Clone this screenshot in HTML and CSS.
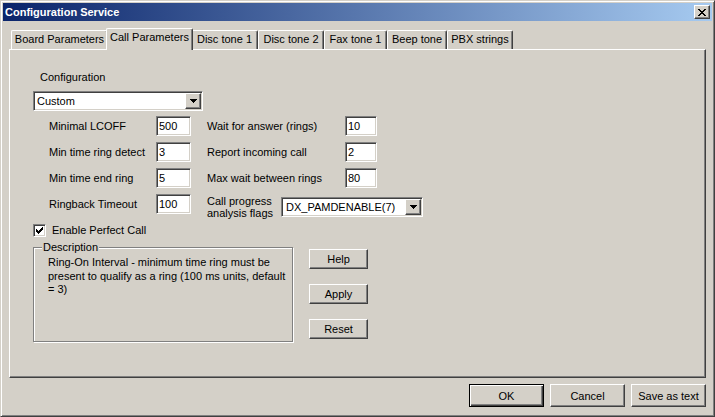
FILE: index.html
```html
<!DOCTYPE html>
<html>
<head>
<meta charset="utf-8">
<title>Configuration Service</title>
<link rel="stylesheet" href="styles.css">
</head>
<body>
<div class="window">
  <div class="titlebar">
    <span class="title">Configuration Service</span>
    <button class="close bevel" type="button" aria-label="Close">
      <svg width="8" height="7" viewBox="0 0 8 7" shape-rendering="crispEdges">
        <rect x="0" y="0" width="2" height="1"/><rect x="6" y="0" width="2" height="1"/>
        <rect x="1" y="1" width="2" height="1"/><rect x="5" y="1" width="2" height="1"/>
        <rect x="2" y="2" width="4" height="1"/>
        <rect x="3" y="3" width="2" height="1"/>
        <rect x="2" y="4" width="4" height="1"/>
        <rect x="1" y="5" width="2" height="1"/><rect x="5" y="5" width="2" height="1"/>
        <rect x="0" y="6" width="2" height="1"/><rect x="6" y="6" width="2" height="1"/>
      </svg>
    </button>
  </div>

  <div class="tabs">
    <div class="tab t-board">Board Parameters</div>
    <div class="tab t-call active">Call Parameters</div>
    <div class="tab t-disc1">Disc tone 1</div>
    <div class="tab t-disc2">Disc tone 2</div>
    <div class="tab t-fax">Fax tone 1</div>
    <div class="tab t-beep">Beep tone</div>
    <div class="tab t-pbx">PBX strings</div>
  </div>

  <div class="panel">
    <div class="config-label">Configuration</div>
    <div class="combo sunken combo-config">
      <span class="combo-text">Custom</span>
      <span class="combo-btn bevel">
        <svg width="7" height="4" viewBox="0 0 7 4" shape-rendering="crispEdges">
          <rect x="0" y="0" width="7" height="1"/><rect x="1" y="1" width="5" height="1"/>
          <rect x="2" y="2" width="3" height="1"/><rect x="3" y="3" width="1" height="1"/>
        </svg>
      </span>
    </div>

    <div class="fields">
      <span class="lbl c-l">Minimal LCOFF</span>
      <span class="edit sunken c-e">500</span>
      <span class="lbl c-rl">Wait for answer (rings)</span>
      <span class="edit sunken c-re">10</span>

      <span class="lbl c-l">Min time ring detect</span>
      <span class="edit sunken c-e">3</span>
      <span class="lbl c-rl">Report incoming call</span>
      <span class="edit sunken c-re">2</span>

      <span class="lbl c-l">Min time end ring</span>
      <span class="edit sunken c-e">5</span>
      <span class="lbl c-rl">Max wait between rings</span>
      <span class="edit sunken c-re">80</span>

      <span class="lbl c-l">Ringback Timeout</span>
      <span class="edit sunken c-e">100</span>
      <span class="lbl2 c-rl2">Call progress<br>analysis flags</span>
      <div class="combo sunken combo-flags">
        <span class="combo-text">DX_PAMDENABLE(7)</span>
        <span class="combo-btn bevel">
          <svg width="7" height="4" viewBox="0 0 7 4" shape-rendering="crispEdges">
            <rect x="0" y="0" width="7" height="1"/><rect x="1" y="1" width="5" height="1"/>
            <rect x="2" y="2" width="3" height="1"/><rect x="3" y="3" width="1" height="1"/>
          </svg>
        </span>
      </div>
    </div>

    <div class="check-row">
      <span class="checkbox sunken">
        <svg width="7" height="7" viewBox="0 0 7 7" shape-rendering="crispEdges">
          <rect x="0" y="2" width="1" height="3"/><rect x="1" y="3" width="1" height="3"/>
          <rect x="2" y="4" width="1" height="3"/><rect x="3" y="3" width="1" height="3"/>
          <rect x="4" y="2" width="1" height="3"/><rect x="5" y="1" width="1" height="3"/>
          <rect x="6" y="0" width="1" height="3"/>
        </svg>
      </span>
      <span class="check-label">Enable Perfect Call</span>
    </div>

    <div class="group-row">
      <fieldset class="group">
        <legend>Description</legend>
        <p class="desc">Ring-On Interval - minimum time ring must be<br>present to qualify as a ring (100 ms units, default<br>= 3)</p>
      </fieldset>
      <div class="side-buttons">
        <button class="btn bevel side" type="button">Help</button>
        <button class="btn bevel side" type="button">Apply</button>
        <button class="btn bevel side" type="button">Reset</button>
      </div>
    </div>
  </div>

  <div class="footer">
    <button class="btn foot default" type="button">OK</button>
    <button class="btn bevel foot" type="button">Cancel</button>
    <button class="btn bevel foot" type="button">Save as text</button>
  </div>
</div>
</body>
</html>
```

FILE: styles.css
```css
* { box-sizing: border-box; }

html, body {
  margin: 0;
  padding: 0;
}

body {
  background: #d4d0c8;
  font-family: "Liberation Sans", Arial, sans-serif;
  font-size: 11px;
  color: #000;
}

.window {
  width: 715px;
  height: 417px;
  border: 1px solid;
  border-color: #d4d0c8 #404040 #404040 #d4d0c8;
  box-shadow: inset 1px 1px #fff, inset -1px -1px #808080;
  padding: 2px;
  background: #d4d0c8;
}

/* generic 3D styles */
.bevel {
  background: #d4d0c8;
  border: 1px solid;
  border-color: #fff #404040 #404040 #fff;
  box-shadow: inset -1px -1px #808080;
}

.sunken {
  background: #fff;
  border: 1px solid;
  border-color: #808080 #fff #fff #808080;
  box-shadow: inset 1px 1px #404040, inset -1px -1px #d4d0c8;
}

/* title bar */
.titlebar {
  height: 18px;
  display: flex;
  align-items: center;
  justify-content: space-between;
  padding: 0 2px;
  background: linear-gradient(to right, #0a246a, #a6caf0);
}

.title {
  color: #fff;
  font-weight: bold;
  line-height: 13px;
}

.close {
  width: 16px;
  height: 14px;
  padding: 0;
  display: flex;
  align-items: center;
  justify-content: center;
}

.close svg { fill: #000; display: block; margin-left: -1px; }

/* tabs */
.tabs {
  display: flex;
  align-items: flex-end;
  margin: 7px 0 -1px 8px;
  height: 22px;
}

.tab {
  flex: 0 0 auto;
  height: 19px;
  margin-bottom: 1px;
  border-top: 1px solid #fff;
  border-left: 1px solid #fff;
  border-right: 1px solid #404040;
  box-shadow: inset -1px 0 #808080;
  border-radius: 2px 2px 0 0;
  text-align: center;
  line-height: 17px;
  white-space: nowrap;
  background: #d4d0c8;
}

.t-board { width: 97px; }
.t-call { width: 83px; }
.t-disc1 { width: 67px; }
.t-disc2 { width: 66px; }
.t-fax { width: 63px; }
.t-beep { width: 60px; }
.t-pbx { width: 66px; }

.tab.active {
  width: 87px;
  height: 22px;
  margin: 0 -2px;
  padding-top: 1px;
  line-height: 15px;
  position: relative;
  z-index: 1;
}

/* panel */
.panel {
  height: 329px;
  margin: 0 6px;
  border-top: 1px solid #fff;
  border-left: 1px solid #fff;
  border-right: 1px solid #404040;
  border-bottom: 1px solid #404040;
  box-shadow: inset -1px -1px #808080;
}

.config-label {
  margin: 21px 0 0 30px;
  line-height: 13px;
}

.combo {
  display: flex;
  height: 20px;
  padding: 1px;
}

.combo-config {
  width: 170px;
  margin: 7px 0 0 23px;
}

.combo-text {
  flex: 1;
  line-height: 16px;
  padding-left: 2px;
  white-space: nowrap;
}

.combo-btn {
  width: 16px;
  height: 16px;
  display: flex;
  align-items: center;
  justify-content: center;
}

.combo-btn svg { fill: #000; display: block; }

/* field grid */
.fields {
  display: grid;
  grid-template-columns: 107px 35px 16px 74px 64px 32px 46px;
  grid-auto-rows: auto;
  row-gap: 6px;
  margin: 5px 0 0 39px;
  align-items: start;
}

.lbl {
  line-height: 20px;
  white-space: nowrap;
}

.c-l { grid-column: 1; }
.c-e { grid-column: 2; }
.c-rl { grid-column: 4 / span 2; }
.c-re { grid-column: 6; }

.lbl2 {
  grid-column: 4;
  line-height: 12px;
  margin-top: 1px;
  white-space: nowrap;
}

.edit {
  height: 20px;
  padding: 0 2px;
  line-height: 18px;
  white-space: nowrap;
  display: block;
}

.combo-flags {
  grid-column: 5 / span 3;
  margin-top: 3px;
}

.combo-flags .combo-text { padding-left: 3px; }

/* checkbox */
.check-row {
  display: flex;
  align-items: center;
  margin: 5px 0 0 23px;
  height: 13px;
}

.checkbox {
  width: 13px;
  height: 13px;
  display: flex;
  align-items: center;
  justify-content: center;
}

.checkbox svg { fill: #000; display: block; }

.check-label {
  margin-left: 6px;
  line-height: 13px;
}

/* group box */
.group-row {
  display: flex;
  align-items: flex-start;
  margin: 4px 0 0 23px;
}

.group {
  width: 260px;
  height: 101px;
  margin: 0;
  padding: 2px 4px 0 14px;
  border: 1px solid #808080;
  box-shadow: 1px 1px 0 #fff, inset 1px 1px 0 #fff;
  min-width: 0;
}

.group legend {
  padding: 0 1px;
  margin-left: -6px;
  line-height: 13px;
  background: #d4d0c8;
}

.desc {
  margin: 0;
  line-height: 13.5px;
  white-space: nowrap;
}

.side-buttons {
  display: flex;
  flex-direction: column;
  gap: 15px;
  margin: 8px 0 0 16px;
}

.btn {
  font-family: inherit;
  font-size: 11px;
  color: #000;
  padding: 0;
  text-align: center;
}

.side {
  width: 59px;
  height: 20px;
}

/* footer */
.footer {
  display: flex;
  justify-content: flex-end;
  gap: 6px;
  margin: 6px 6px 0 0;
}

.foot {
  width: 75px;
  height: 23px;
}

.default {
  background: #d4d0c8;
  border: 1px solid #000;
  box-shadow: inset 1px 1px #fff, inset -1px -1px #404040, inset -2px -2px #808080;
}
```
